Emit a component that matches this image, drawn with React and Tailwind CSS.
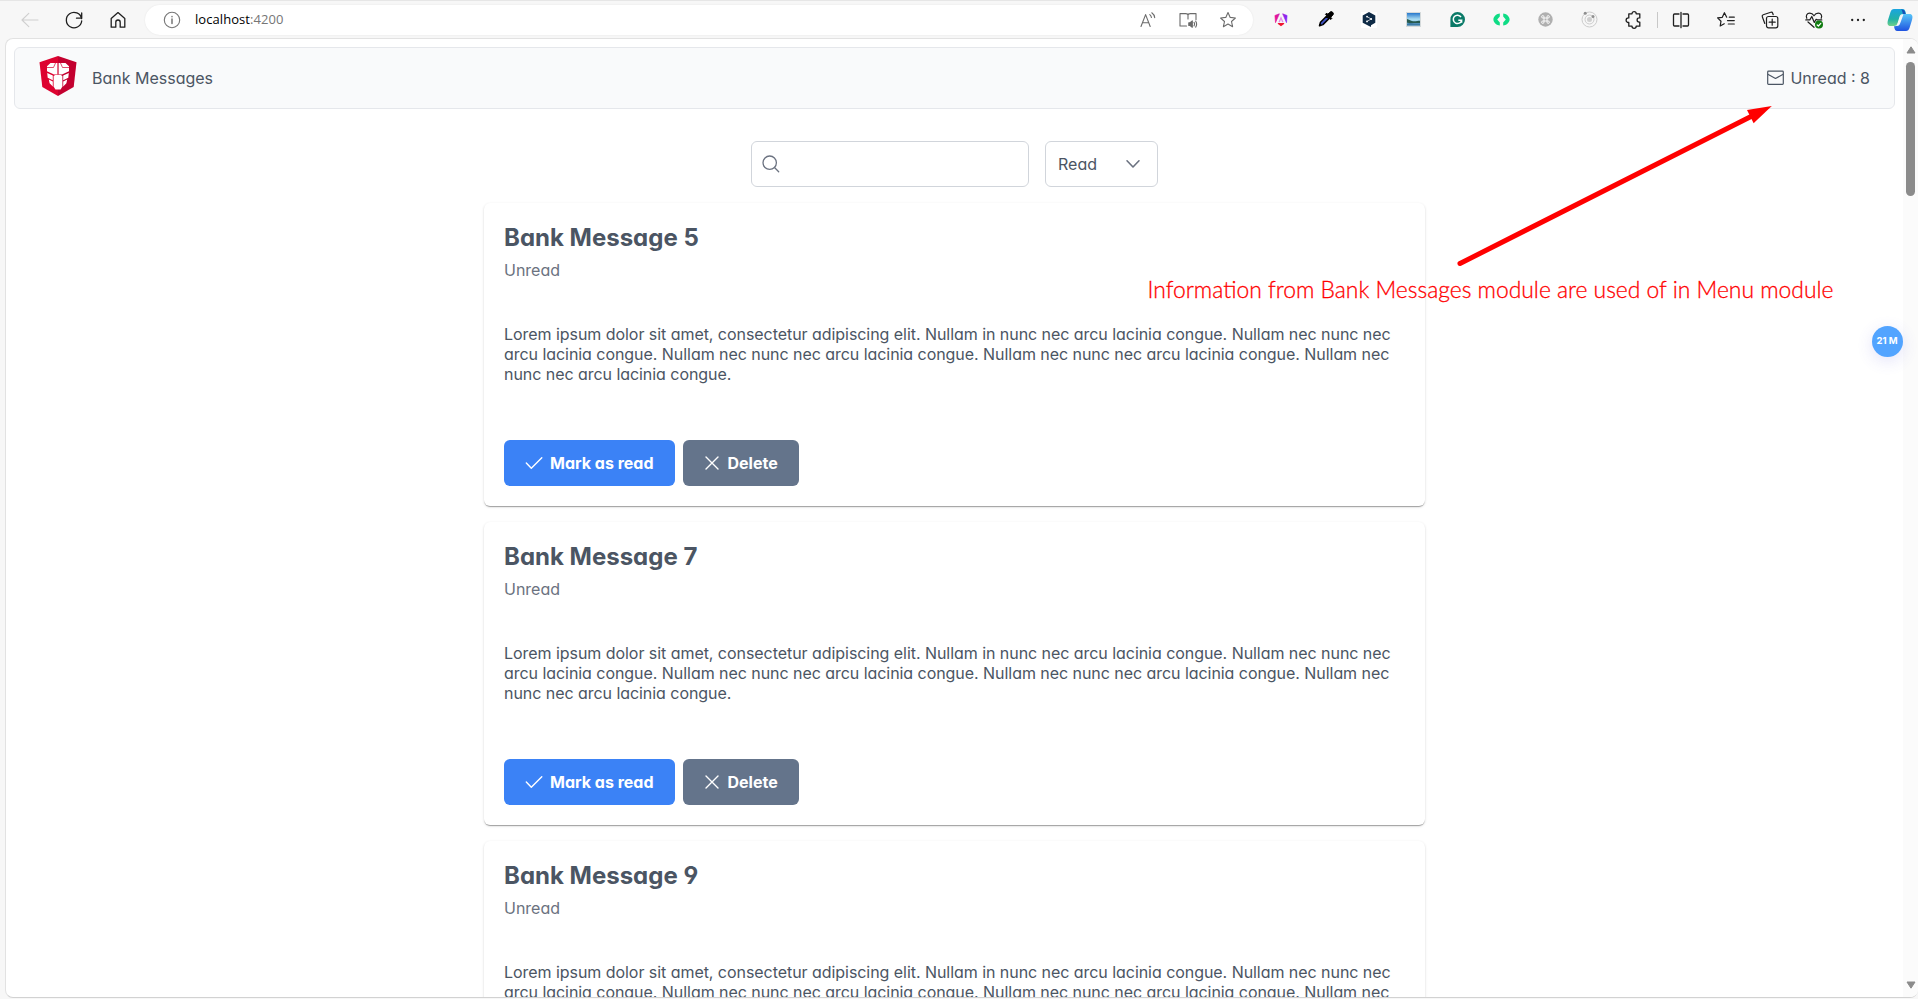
const messages = [5, 7, 9];

const lorem =
  "Lorem ipsum dolor sit amet, consectetur adipiscing elit. Nullam in nunc nec arcu lacinia congue. Nullam nec nunc nec arcu lacinia congue. Nullam nec nunc nec arcu lacinia congue. Nullam nec nunc nec arcu lacinia congue. Nullam nec nunc nec arcu lacinia congue.";

/* 20px line icon, drawn on a 20 unit grid */
function Line({ children, color = "#1f1f1f", size = 20, w = 1.1, className = "" }) {
  return (
    <svg width={size} height={size} viewBox="0 0 20 20" fill="none" stroke={color} strokeWidth={w} strokeLinecap="round" strokeLinejoin="round" className={"shrink-0 " + className}>
      {children}
    </svg>
  );
}

function Slot({ children }) {
  return <div className="flex h-10 w-11 shrink-0 items-center justify-center">{children}</div>;
}

const STAR = "M10 2.6l2.2 4.8 5.2.6-3.9 3.5 1.1 5.2L10 14.1l-4.6 2.6 1.1-5.2L2.6 8l5.2-.6z";

function BrowserBar() {
  return (
    <div className="flex h-[38px] shrink-0 items-center border-t border-[#e6e6e6] pl-2">
      <Slot>
        <Line color="#cfcfcf"><path d="M18 10H2M8.8 3.3L2 10l6.8 6.7" /></Line>
      </Slot>
      <Slot>
        <Line w={1.3}><path d="M17.6 8.6A7.7 7.7 0 1 0 17.7 11M17.7 3v5.2h-5.2" /></Line>
      </Slot>
      <Slot>
        <Line w={1.3}><path d="M3.2 8.4L10 2.6l6.8 5.8v8.8h-4.6v-5a2.2 2.2 0 0 0-4.4 0v5H3.2z" /></Line>
      </Slot>
      <div className="ml-[5px] flex h-[30px] w-[1108px] shrink-0 items-center rounded-full bg-white pl-[17px] shadow-[0_0_2px_rgba(0,0,0,0.08)]">
        <Line color="#767676" w={1.1} size={20}>
          <circle cx="10" cy="10" r="7.7" />
          <path d="M10 9v4.6M10 6.4v.3" strokeWidth="1.5" />
        </Line>
        <div className="ml-[13px] flex-1 font-['Open_Sans','Noto_Sans',sans-serif] text-[13px] tracking-[0.06px] text-black">
          localhost<span className="text-[#767676]">:4200</span>
        </div>
        <div className="flex items-center gap-5 pr-[15px]">
          <Line color="#6b6b6b">
            <path d="M3 16.5L7.6 4.6l4.6 11.9M4.5 12.7h6.2M11.8 4.6c1 .8 1.5 1.7 1.6 2.9M13.8 2.8c1.7 1.2 2.7 2.9 2.9 4.8" />
          </Line>
          <Line color="#6b6b6b">
            <path d="M8.5 16H2V3.6h5.6c1.3 0 2.4.6 2.4 1.6 0-1 1.1-1.6 2.4-1.6H18v6.2M10 5.2V9" />
            <path d="M10.8 12.7h1.3l2.2-1.8v6.4l-2.2-1.8h-1.3z" fill="#6b6b6b" />
            <path d="M16 12.4c.7 1 .7 2.4 0 3.5M17.7 11.2c1.2 1.9 1.2 4 0 5.9" />
          </Line>
          <Line color="#6b6b6b"><path d={STAR} /></Line>
        </div>
      </div>
      <div className="ml-[6px] flex shrink-0 items-center">
        <Slot>
          <svg width="14" height="14" viewBox="0 0 14 14">
            <defs>
              <linearGradient id="ng" x1="0" y1="0" x2="1" y2="0">
                <stop offset="0" stopColor="#f0148c" />
                <stop offset="1" stopColor="#7d28ff" />
              </linearGradient>
            </defs>
            <path d="M5.2.8L.9 2.5l.6 7.2 3.9-8.9zM8.8.8l4.3 1.7-.6 7.2-3.9-8.9z" fill="url(#ng)" stroke="url(#ng)" strokeWidth=".6" />
            <path d="M7 3.3L4.4 9.3h1.5L7 6.5l1.1 2.8h1.5z" fill="#e08be8" />
            <path d="M3.6 10.8l.6-.8h5.6l.6.8L7 13.3z" fill="#f0142f" />
          </svg>
        </Slot>
        <Slot>
          <svg width="17" height="17" viewBox="0 0 17 17">
            <path d="M2.5 14.7l1-3.5 6-6 2.4 2.4-6 6z" fill="#4054c8" stroke="#000" strokeWidth="1.5" strokeLinejoin="round" />
            <path d="M8.5 3.3l5.2 5.2 1.1-1.1-1.1-1.2 2-2a2 2 0 0 0-2.9-2.9l-2 2-1.1-1.2z" fill="#000" stroke="#000" />
          </svg>
        </Slot>
        <Slot>
          <div className="flex size-4 items-center justify-center bg-white">
            <svg width="14" height="15" viewBox="0 0 14 15">
              <path d="M7 0l6.3 3.5v7.2L9 13.2V15l-2.5-1.3L.7 10.7V3.5z" fill="#0f2b46" />
              <path d="M5 4.6L9.2 7 5 9.4" stroke="#fff" strokeWidth=".7" fill="none" />
              <circle cx="5" cy="4.6" r=".9" fill="#fff" /><circle cx="9.2" cy="7" r=".9" fill="#fff" /><circle cx="5" cy="9.4" r=".9" fill="#fff" />
            </svg>
          </div>
        </Slot>
        <Slot>
          <svg width="15" height="15" viewBox="0 0 15 15">
            <defs>
              <linearGradient id="sky" x1="0" y1="0" x2="0" y2="1">
                <stop offset="0" stopColor="#2878cc" /><stop offset=".5" stopColor="#a9dcf2" /><stop offset="1" stopColor="#7db8d8" />
              </linearGradient>
            </defs>
            <path d="M0 0h15v15H0z" fill="#d5dadb" />
            <path d="M1 1h13v12.5H1z" fill="url(#sky)" />
            <path d="M1 7c2 .2 3 2 6 2.3s5-.6 7-.5v2.2c-4-.3-9 .7-13-.3z" fill="#265a50" />
            <path d="M1 11.5c5-1 8 .3 13-.3v2.3H1z" fill="#3c7ba6" />
          </svg>
        </Slot>
        <Slot>
          <svg width="15" height="15" viewBox="0 0 15 15">
            <path d="M7.5 0a7.5 7.5 0 1 1 0 15H.4V7.5A7.2 7.2 0 0 1 7.5 0z" fill="#0b7a68" />
            <path d="M11 5A4.2 4.2 0 1 0 11.6 8.3H8.3M11.6 8.3v2.5" stroke="#fff" strokeWidth="1.5" fill="none" />
          </svg>
        </Slot>
        <Slot>
          <svg width="17" height="13" viewBox="0 0 17 13">
            <path d="M6.8.5v3L4.2 6.5l2.6 3v3C4 12.3.4 9.8.4 6.5S4 .7 6.8.5zM10.2.5v3l2.6 3-2.6 3v3c2.8-.2 6.4-2.7 6.4-6S13 .7 10.2.5z" fill="#0fdc85" />
          </svg>
        </Slot>
        <Slot>
          <svg width="15" height="15" viewBox="0 0 15 15">
            <circle cx="7.5" cy="7.5" r="7.2" fill="#b0b0b0" />
            <path d="M6 6h3v3H6zM6 6H4.9A1.2 1.2 0 1 1 6 4.9zM9 6V4.9A1.2 1.2 0 1 1 10.1 6zM9 9h1.1A1.2 1.2 0 1 1 9 10.1zM6 9v1.1A1.2 1.2 0 1 1 4.9 9z" fill="none" stroke="#fff" strokeWidth=".9" />
          </svg>
        </Slot>
        <Slot>
          <svg width="17" height="17" viewBox="0 0 17 17" fill="none" stroke="#cccccc">
            <circle cx="8.5" cy="8.5" r="7.5" /><circle cx="8.5" cy="8.5" r="4.5" />
            <circle cx="8.5" cy="8.5" r="2.5" fill="#d0d0d0" stroke="none" />
            <circle cx="4.2" cy="2.3" r="1.5" fill="#8f8f8f" stroke="none" /><circle cx="12" cy="5.4" r="1.5" fill="#8f8f8f" stroke="none" />
          </svg>
        </Slot>
        <Slot>
          <Line w={1.3} className="ml-px">
            <path d="M4.8 3.8H8a2.1 2.1 0 0 1 4.2 0h3.6v4.1h-.6a2.1 2.1 0 0 0 0 4.2h.6v4.1h-3.6a2.1 2.1 0 0 1-4.2 0H4.8v-3.7H4.4a2.3 2.3 0 0 1 0-4.6h.4z" />
          </Line>
        </Slot>
        <div className="mr-px ml-[2px] h-4 w-px bg-[#c8c8c8]" />
        <Slot>
          <Line w={1.3}>
            <path d="M8 4H3.5A1 1 0 0 0 2.5 5v10a1 1 0 0 0 1 1H8M10 2.3v15.4M12 4h4.5a1 1 0 0 1 1 1v10a1 1 0 0 1-1 1H12" />
          </Line>
        </Slot>
        <Slot>
          <Line w={1.2} className="ml-px">
            <path d="M10.7 7.2L8.4 2.7 6.3 7.3l-4.7.6L5 11.2 4.2 16l4-2.3M13.3 7.2h5M11.5 10.6h6.8M12.3 14h6" />
          </Line>
        </Slot>
        <Slot>
          <Line w={1.2} className="ml-px">
            <path d="M4.8 13.5L2.3 6.7a1.5 1.5 0 0 1 .9-1.9l7.6-2.5a1.5 1.5 0 0 1 1.9.9l.5 1.5" />
            <rect x="6.5" y="6.5" width="11.3" height="11.3" rx="2" />
            <path d="M12.2 9.2v6M9.2 12.2h6" />
          </Line>
        </Slot>
        <Slot>
          <Line w={1.2} className="ml-px">
            <path d="M2.8 8.3C1.5 5.5 3 3.2 5.7 3.2c1.8 0 3.3 1 4.3 2.6 1-1.6 2.5-2.6 4.3-2.6 2.7 0 4.2 2.3 2.9 5.1M4 12L10 17.3M1.8 9.9h4l2-3.4 2.5 6 1.8-3.2 1.2.6h4.5" />
            <circle cx="15" cy="14.5" r="4" fill="#107c10" stroke="none" />
            <path d="M13.2 15l1.2 1 2.4-2.7" stroke="#fff" />
          </Line>
        </Slot>
        <Slot>
          <Line className="ml-px"><path d="M4.2 10h.01M10 10h.01M15.8 10h.01" strokeWidth="2.3" /></Line>
        </Slot>
        <svg width="26" height="24" viewBox="0 0 26 24" className="ml-2 shrink-0">
          <defs>
            <linearGradient id="cpA" x1="0" y1="0" x2="0" y2="1">
              <stop offset="0" stopColor="#1aa5e0" /><stop offset=".6" stopColor="#22b1a6" /><stop offset="1" stopColor="#6fd18a" />
            </linearGradient>
            <linearGradient id="cpB" x1="0" y1="0" x2="0" y2="1">
              <stop offset="0" stopColor="#57c6f8" /><stop offset="1" stopColor="#1f52e0" />
            </linearGradient>
          </defs>
          <path d="M7 1h8.5c2.5 0 3 2 3.5 5h-3c-2 0-3 1-3.6 3l-1.8 6c-.6 2-1.6 3-3.6 3H3.5C.5 18 0 15.500 1 12L3.500 4C4.200 2 5.200 1 7 1z" fill="url(#cpA)" />
          <path d="M14 1.500c3 0 4 1 4.600 4.700L16 6.500l-1-4z" fill="#1650b8" />
          <path d="M19 23h-8.500C8 23 7.600 21.500 7 18.300c3 .2 4-1 4.700-3.300l1.900-6c.6-2 1.600-3 3.400-3h5.500c3 0 3.500 2.500 2.500 6l-2.500 8c-.7 2-1.700 3-3.500 3z" fill="url(#cpB)" />
          <path d="M13 9.500c.5-2 1.500-3.300 3.500-3.300L13.300 15c-.6 1.800-1.500 3-3.500 3z" fill="#f7f7f7" />
        </svg>
      </div>
    </div>
  );
}

function Logo() {
  return (
    <svg width="38" height="40" viewBox="0 0 38 40" className="shrink-0">
      <path d="M19 0L.5 6.3 3.3 31 19 40z" fill="#dd0330" />
      <path d="M19 0l18.5 6.3L34.700 31 19 40z" fill="#c3002f" />
      <path d="M11.500 7h6.900v11.300l-3.400.2-7-3.200v-5zM26.500 7h-6.900v11.300l3.400.2 7-3.200v-5z" fill="#fff" />
      <path d="M8.200 17l5.600 2.600v4.600L8.700 21.800zM29.800 17l-5.600 2.600v4.600l5.100-2.400zM9.800 23.600l4 1.800v5l-3.200-3.100zM28.200 23.600l-4 1.800v5l3.200-3.100z" fill="#fff" />
      <path d="M14.600 20l2-1.200h4.800l2 1.200v10.500L21.600 33.500h-5.200L14.600 30.500z" fill="#fff" />
      <path d="M8 11.500h6.500l2-4.500M30 11.500h-6.500l-2-4.500" stroke="#d2002f" strokeWidth=".7" fill="none" />
    </svg>
  );
}

function MenuBar() {
  return (
    <div className="flex h-[62px] shrink-0 items-center rounded-md border border-[#e5e7eb] bg-[#f9fafb] px-6">
      <div className="-mt-1 flex"><Logo /></div>
      <div className="ml-[15px]">Bank Messages</div>
      <div className="ml-auto flex items-center gap-1.5">
        <svg width="17" height="16" viewBox="0 0 17 16" fill="none" stroke="#4b5563" strokeWidth="1.2" strokeLinejoin="round">
          <rect x=".7" y="1.1" width="15.6" height="13.2" rx=".8" />
          <path d="M.8 4.2l7.7 4.3 7.7-4.3" />
        </svg>
        <span>Unread : 8</span>
      </div>
    </div>
  );
}

function MessageCard({ id }) {
  return (
    <article className="flex h-[303px] w-[941px] shrink-0 flex-col rounded-md bg-white p-5 shadow-[0_2px_1px_-1px_rgba(0,0,0,0.2),0_1px_1px_0_rgba(0,0,0,0.14),0_1px_3px_0_rgba(0,0,0,0.12)]">
      <h2 className="text-2xl leading-[29px] font-bold">Bank Message {id}</h2>
      <div className="mt-2 leading-5 text-[#6b7280]">Unread</div>
      <p className="mt-11 leading-5 tracking-[-0.05px]">{lorem}</p>
      <div className="mt-auto flex gap-2 font-bold text-white">
        <button className="flex h-[46px] w-[171px] items-center rounded-md bg-[#3b82f6] pl-[21px]">
          <svg width="18" height="16" viewBox="0 0 18 16" fill="none" stroke="#fff" strokeWidth="1.4" strokeLinecap="round" strokeLinejoin="round">
            <path d="M1.3 8l5 5.300L16.800 2.800" />
          </svg>
          <span className="ml-[7px]">Mark as read</span>
        </button>
        <button className="flex h-[46px] w-[116px] items-center rounded-md bg-[#64748b] pl-[21px]">
          <svg width="16" height="16" viewBox="0 0 16 16" fill="none" stroke="#fff" strokeWidth="1.4" strokeLinecap="round">
            <path d="M2 2l12 12M14 2L2 14" />
          </svg>
          <span className="ml-[7.5px]">Delete</span>
        </button>
      </div>
    </article>
  );
}

function ScrollBar() {
  return (
    <div className="flex w-[15px] shrink-0 flex-col items-center bg-[#fbfbfb] pt-[7px] pb-2">
      <svg width="10" height="8" viewBox="0 0 10 8"><path d="M5 .8L9 7H1z" fill="#8b8b8b" stroke="#8b8b8b" strokeLinejoin="round" /></svg>
      <div className="mt-2 h-[134px] w-[9px] rounded-full bg-[#8b8b8b]" />
      <svg width="10" height="8" viewBox="0 0 10 8" className="mt-auto"><path d="M5 7.2L9 1H1z" fill="#8b8b8b" stroke="#8b8b8b" strokeLinejoin="round" /></svg>
    </div>
  );
}

export default function App() {
  return (
    <div className="relative flex h-[999px] w-[1918px] flex-col overflow-hidden bg-[#f7f7f7] font-['Inter',sans-serif] text-base text-[#4b5563] [font-feature-settings:'cv02','cv03','cv04','cv11']">
      <BrowserBar />
      <div className="ml-[5px] flex h-[960px] shrink-0 overflow-hidden rounded-lg border border-r-0 border-[#e2e2e2] border-b-[#d2d2d2] bg-white">
        <main className="flex min-w-0 flex-1 flex-col overflow-hidden pt-2 pr-2 pl-2">
          <MenuBar />
          <div className="mt-8 flex shrink-0 justify-center gap-4">
            <div className="flex h-[46px] w-[278px] items-center rounded-md border border-[#d1d5db] bg-white pl-[10px]">
              <svg width="18" height="18" viewBox="0 0 18 18" fill="none" stroke="#6b7280" strokeWidth="1.3" strokeLinecap="round">
                <circle cx="7.7" cy="7.7" r="6.7" />
                <path d="M12.5 12.5l4.200 4.200" />
              </svg>
            </div>
            <div className="flex h-[46px] w-[113px] items-center justify-between rounded-md border border-[#d1d5db] bg-white pr-4 pl-3">
              <span>Read</span>
              <svg width="16" height="16" viewBox="0 0 16 16" fill="none" stroke="#6b7280" strokeWidth="1.6" strokeLinecap="round" strokeLinejoin="round">
                <path d="M2 4.8l6 6.200 6-6.200" />
              </svg>
            </div>
          </div>
          <div className="mt-4 flex flex-col items-center gap-4">
            {messages.map((id) => (
              <MessageCard key={id} id={id} />
            ))}
          </div>
        </main>
        <ScrollBar />
      </div>

      <div className="absolute top-[326px] left-[1871.5px] flex size-[31px] items-center justify-center rounded-full bg-[#52a4ff] text-[9.5px] font-bold text-white shadow-[0_4px_16px_rgba(80,80,220,0.16)]">
        21 M
      </div>

      <svg className="absolute top-[100px] left-[1450px]" width="330" height="170" viewBox="1450 100 330 170">
        <path d="M1460 263.5L1752 116" stroke="#f00" strokeWidth="5" strokeLinecap="round" />
        <path d="M1771.8 106L1747 110l6.600 13.300z" fill="#f00" />
      </svg>
      <div className="absolute top-[273px] left-[1147.5px] font-['Lato',sans-serif] text-[22.85px] leading-8 font-light whitespace-nowrap text-[#f00] [-webkit-text-stroke:0.3px_#f00]">
        Information from Bank Messages module are used of in Menu module
      </div>
    </div>
  );
}
